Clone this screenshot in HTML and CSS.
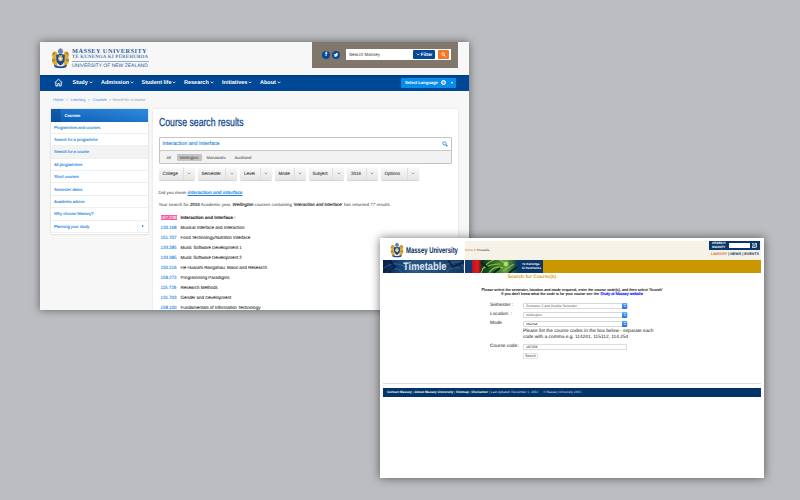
FILE: index.html
```
<!DOCTYPE html>
<html lang="en">
<head>
<meta charset="utf-8">
<title>Massey University course search</title>
<link rel="stylesheet" href="styles.css">
</head>
<body>
<svg class="defs" width="0" height="0" aria-hidden="true">
  <symbol id="crest" viewBox="0 0 20 21">
    <path d="M3 3C1 5 0 8 2 9C0 12 1 16 4 18L7 19L6 13L5 10L7 7L6 4ZM17 3C19 5 20 8 18 9C20 12 19 16 16 18L13 19L14 13L15 10L13 7L14 4Z" fill="#e3a92c"/>
    <path d="M2 6L4 5M1.500 13L4 12M18 6L16 5M18.500 13L16 12" stroke="#1c478c" stroke-width=".8"/>
    <path d="M8 1L10 0L12 1L13 4L11 6H9L7 4Z" fill="#6982a5"/>
    <path d="M5.500 7Q10 5 14.500 7V12Q14 16 10 18Q6 16 5.500 12Z" fill="#174b94"/>
    <circle cx="10" cy="11" r="2.600" fill="#e8bd55"/>
    <path d="M8 8h4M10 9.500v3M8.500 11h3" stroke="#fff" stroke-width=".7"/>
    <path d="M3 17Q10 21.500 17 17L16 20Q10 22 4 20Z" fill="#174b94"/>
  </symbol>
  <symbol id="chev" viewBox="0 0 6 4"><path d="M1 .8L3 2.800L5 .8" fill="none" stroke="currentColor" stroke-width="1.100"/></symbol>
  <symbol id="mag" viewBox="0 0 8 8"><circle cx="3.200" cy="3.200" r="2.200" fill="none" stroke="currentColor" stroke-width="1.100"/><path d="M5 5L7.300 7.300" stroke="currentColor" stroke-width="1.500"/></symbol>
</svg>

<main class="window search-window">
  <header class="top">
    <svg class="crest"><use href="#crest"/></svg>
    <div class="brand">
      <div class="b1">MASSEY UNIVERSITY</div>
      <div class="b2">TE KUNENGA KI PŪREHUROA</div>
      <div class="b3">UNIVERSITY OF NEW ZEALAND</div>
    </div>
    <div class="tools">
      <span class="social">f</span>
      <span class="social"><svg width="5" height="4" viewBox="0 0 10 8"><path d="M0 7Q3 8 5 6Q2 6 1 1Q3 3 5 3Q5 0 7 0L10 1Q9 8 3 8Z" fill="#fff"/></svg></span>
      <div class="site-search"><span class="ph">Search Massey</span><span class="filter"><svg class="chev"><use href="#chev"/></svg>Filter</span><span class="go"><svg><use href="#mag"/></svg></span></div>
    </div>
  </header>
  <nav class="nav">
    <svg class="house" viewBox="0 0 9 9"><path d="M.7 4.800L4.500 1.200L8.300 4.800M1.900 4.200V8H3.800V5.500H5.300V8H7.200V4.200" fill="none" stroke="#fff" stroke-width=".9"/></svg>
    <a class="n1">Study<svg class="chev"><use href="#chev"/></svg></a>
    <a class="n2">Admission<svg class="chev"><use href="#chev"/></svg></a>
    <a class="n3">Student life<svg class="chev"><use href="#chev"/></svg></a>
    <a class="n4">Research<svg class="chev"><use href="#chev"/></svg></a>
    <a class="n5">Initiatives<svg class="chev"><use href="#chev"/></svg></a>
    <a class="n6">About<svg class="chev"><use href="#chev"/></svg></a>
    <span class="lang">Select Language<i class="globe"></i><b class="tri"></b></span>
  </nav>
  <div class="crumbs"><a>Home</a><i>&gt;</i><a>Learning</a><i>&gt;</i><a>Courses</a><span>&gt; Search for a course</span></div>
  <div class="body">
    <aside class="side">
      <div class="side-head">Courses</div>
      <a>Programmes and courses</a>
      <a>Search for a programme</a>
      <a class="on">Search for a course</a>
      <a>All programmes</a>
      <a>Short courses</a>
      <a>Semester dates</a>
      <a>Academic advice</a>
      <a>Why choose Massey?</a>
      <a class="more">Planning your study<span></span></a>
    </aside>
    <section class="panel">
      <h1><span>Course search results</span></h1>
      <div class="finder">
        <div class="query">interaction and interface<svg><use href="#mag"/></svg></div>
        <div class="tabs"><span class="t1">All</span><span class="t2">Wellington</span><span class="t3">Manawatu</span><span class="t4">Auckland</span></div>
      </div>
      <div class="filters">
        <div class="f1"><span>College</span><i><svg class="chev"><use href="#chev"/></svg></i></div>
        <div class="f2"><span>Semester</span><i><svg class="chev"><use href="#chev"/></svg></i></div>
        <div class="f3"><span>Level</span><i><svg class="chev"><use href="#chev"/></svg></i></div>
        <div class="f4"><span>Mode</span><i><svg class="chev"><use href="#chev"/></svg></i></div>
        <div class="f5"><span>Subject</span><i><svg class="chev"><use href="#chev"/></svg></i></div>
        <div class="f6"><span>2016</span><i><svg class="chev"><use href="#chev"/></svg></i></div>
        <div class="f7"><span>Options</span><i><svg class="chev"><use href="#chev"/></svg></i></div>
      </div>
      <p class="mean">Did you mean <a>interaction and interface</a></p>
      <p class="summary">Your search for <em>2016</em> Academic year, <em>Wellington</em> courses containing '<em>interaction and interface</em>' has returned <i>77</i> results</p>
      <div class="results">
        <div class="first"><b><mark>197.238</mark></b><span>Interaction and Interface <i>I</i></span></div>
        <div><b>133.168</b><span>Musical Interface and Interaction</span></div>
        <div><b>151.707</b><span>Food Technology/Nutrition Interface</span></div>
        <div><b>133.285</b><span>Music Software Development 1</span></div>
        <div><b>133.385</b><span>Music Software Development 2</span></div>
        <div><b>150.216</b><span>He Huarahi Rangahau: Maori and Research</span></div>
        <div><b>159.272</b><span>Programming Paradigms</span></div>
        <div><b>115.729</b><span>Research Methods</span></div>
        <div><b>131.703</b><span>Gender and Development</span></div>
        <div><b>158.100</b><span>Fundamentals of Information Technology</span></div>
      </div>
    </section>
  </div>
</main>

<section class="window time-window">
  <header class="tt-top">
    <div class="tt-logo"><svg><use href="#crest"/></svg><span><b>Massey University</b></span></div>
    <div class="tt-bar">
      <div class="tt-crumbs"><a>Home</a> &gt; Timetable</div>
      <div class="tt-tools">
        <div class="tt-search"><span>SEARCH<br>MASSEY</span><i></i><svg><use href="#mag"/></svg></div>
        <div class="tt-links"><a>LIBRARY</a> | NEWS | EVENTS</div>
      </div>
    </div>
  </header>
  <div class="banner">
    <div class="photo">
      <svg viewBox="0 0 81 13" preserveAspectRatio="none">
        <defs>
          <linearGradient id="blue"><stop offset="0" stop-color="#071d3e"/><stop offset=".15" stop-color="#103b70"/><stop offset=".35" stop-color="#285482"/><stop offset=".65" stop-color="#244d7b"/><stop offset="1" stop-color="#123765"/></linearGradient>
        </defs>
        <rect width="81" height="13" fill="url(#blue)"/>
        <path d="M0 9Q8 1 18 5T35 12M3 13Q12 4 20 13M50 0Q56 8 68 3T81 10M63 13Q66 6 77 8" stroke="#54779c" fill="none" opacity=".6"/>
        <path d="M6 0L12 7L4 13M65 0L70 7L81 2" stroke="#041835" stroke-width="2" fill="none" opacity=".7"/>
      </svg>
      <span>Timetable</span>
    </div>
    <div class="navy"></div>
    <svg class="fern" viewBox="0 0 45 13" preserveAspectRatio="none">
      <defs><linearGradient id="fern"><stop offset="0" stop-color="#b31525"/><stop offset=".13" stop-color="#e91922"/><stop offset=".19" stop-color="#67201c"/><stop offset=".24" stop-color="#073d24"/><stop offset=".5" stop-color="#316d26"/><stop offset=".75" stop-color="#66a23c"/><stop offset="1" stop-color="#113e4a"/></linearGradient></defs>
      <rect width="45" height="13" fill="url(#fern)"/>
      <path d="M9 13Q13 3 22 0M10 9Q18 4 28 4M17 13Q22 5 31 8M28 0L36 5M31 11L42 4" stroke="#8dbf50" fill="none" stroke-width="1.100"/>
      <path d="M9 2L16 8M21 13L28 8M37 13L45 7" stroke="#05271e" stroke-width="2"/>
      <circle cx="34" cy="4" r="2.300" fill="#b9d66b"/>
    </svg>
    <div class="maori">Te Kunenga<br>ki Purehuroa</div>
  </div>
  <h2>Search for Course(s)</h2>
  <p class="intro">Please select the semester, location and mode required, enter the course code[s], and then select 'Search'<br><span>If you don't know what the code is for your course see the <a>Study at Massey website</a></span></p>
  <div class="form">
    <label>Semester :</label><div class="select">Semester 2 and Double Semester<i></i></div>
    <label>Location &nbsp;:</label><div class="select">Wellington<i></i></div>
    <label>Mode</label><div class="select dark">Internal<i></i></div>
    <p class="hint">Please list the course codes in the box below - separate each<br>code with a comma e.g. 114241, 115112, 114.254</p>
    <label class="cc">Course code:</label><div class="input">197238</div>
    <button>Search</button>
  </div>
  <hr>
  <footer><b>Contact Massey</b> | <b>About Massey University</b> | <b>Sitemap</b> | <b>Disclaimer</b> | <span>Last updated: December 1, 2002</span><span class="copy">© Massey University 2003</span></footer>
</section>
</body>
</html>
```
FILE: styles.css
```
* { box-sizing: border-box; }
body { margin: 0; width: 800px; height: 500px; position: relative; overflow: hidden; background: #bcbdc0; font-family: "Liberation Sans", Arial, sans-serif; text-rendering: geometricPrecision; color: #333; }
h1, h2, p { margin: 0; }
.defs { position: absolute; }
.window { position: absolute; overflow: hidden; white-space: nowrap; }
.search-window { left: 40px; top: 42px; width: 428.500px; height: 267.500px; background: #f7f7f8; box-shadow: 0 0 8px rgba(0,0,0,.5); }
.time-window { left: 380px; top: 238px; width: 384px; height: 240px; padding: 2.500px 3px 0; background: #fff; box-shadow: 0 0 9px rgba(0,0,0,.55); }
.chev { width: 4.200px; height: 3px; }

.top { height: 33px; display: flex; }
.crest { width: 19px; height: 20.500px; margin: 6px 0 0 11px; }
.brand { width: 77px; margin: 5.500px 0 0 2px; color: #285799; }
.b1 { font: bold 6.300px/7px "Liberation Serif", serif; letter-spacing: .47px; }
.b2 { font: bold 4.800px/6px "Liberation Serif", serif; letter-spacing: .24px; border-bottom: .8px solid #8fabd0; height: 7px; color: #557db1; }
.b3 { font-size: 5px; line-height: 8px; }
.tools { width: 146px; height: 26px; margin-left: 163px; background: #81766b; display: flex; align-items: center; padding-left: 10px; }
.social { width: 8px; height: 8px; margin-right: 1.500px; border-radius: 50%; background: #064a93; color: #fff; font: bold 6px/8px "Liberation Sans"; display: flex; align-items: center; justify-content: center; }
.site-search { margin: -1px 0 0 5px; width: 105px; height: 11px; background: #fff; display: flex; align-items: center; font-size: 4.500px; }
.ph { width: 67px; padding-left: 3px; }
.filter { width: 22px; height: 9px; background: #064896; border-radius: 1px; color: #fff; font-weight: bold; font-size: 4.700px; line-height: 9px; display: flex; align-items: center; justify-content: center; gap: 1px; }
.go { width: 11.500px; height: 9px; margin-left: 2.500px; border-radius: 1px; background: #f57626; color: #fff; display: flex; align-items: center; justify-content: center; }
.go svg { width: 5px; height: 5px; }
.nav { height: 15.500px; background: linear-gradient(#003f86, #004996 25%, #004795); color: #fff; display: flex; align-items: center; padding-left: 14px; font-weight: bold; font-size: 5.500px; }
.nav a { display: flex; align-items: center; gap: .8px; }
.house { width: 9px; height: 9px; margin-right: 9.500px; }
.n1 { width: 28.500px; } .n2 { width: 40.500px; } .n3 { width: 42.500px; } .n4 { width: 38px; } .n5 { width: 38px; } .n6 { width: 30px; }
.lang { margin-left: 111px; width: 55px; height: 10px; background: #078ce9; border-radius: 1px; display: flex; align-items: center; padding-left: 4px; font-size: 4.200px; letter-spacing: -.03px; }
.globe { width: 5px; height: 5px; border: .7px solid #fff; border-radius: 50%; margin-left: 3px; background: #69b8f3; }
.tri { margin-left: 5px; border: 1.500px solid transparent; border-top: 2.500px solid #fff; border-bottom: 0; }
.crumbs { height: 18.500px; padding: 0 0 0 13px; display: flex; align-items: center; font-size: 4px; color: #999; letter-spacing: -.1px; }
.crumbs a { color: #4b8be2; }
.crumbs i { font-style: normal; margin: 0 2.500px 0 2.500px; }
.crumbs span { margin-left: 2px; }
.body { display: flex; gap: 5px; padding-left: 11px; }
.side { width: 97px; height: 124.500px; background: #fff; box-shadow: 0 0 2px rgba(0,0,0,.2); }
.side-head { height: 12.500px; padding-left: 13.500px; background: linear-gradient(90deg, rgba(0,55,125,.35) 0 9px, transparent 10px), linear-gradient(10deg, #0c5cb2, #2e8be0); color: #fff; font-weight: bold; font-size: 4.300px; line-height: 13px; letter-spacing: -.2px; }
.side a { height: 12.400px; border-bottom: .6px solid #efefef; padding-left: 3px; display: flex; align-items: center; color: #1381e3; font-size: 4.200px; letter-spacing: -.08px; -webkit-text-stroke: .08px #1381e3; }
.side .on { background: #f3f3f3; }
.side .more { justify-content: space-between; }
.more span { width: 11px; height: 12px; display: flex; align-items: center; justify-content: center; border-left: 1px solid #f3f3f3; }
.more span::before { content: ""; border: 1.500px solid transparent; border-left: 2px solid #1381e3; border-right: 0; }
.panel { width: 304.500px; height: 202px; padding: 6px 5.500px; background: #fff; box-shadow: 0 0 2px rgba(0,0,0,.13); }
h1 { height: 22px; font: 11.600px/15px "Liberation Sans", sans-serif; color: #0b468d; }
h1 span { display: inline-block; transform: scaleX(.75); transform-origin: 0 0; -webkit-text-stroke: .25px #0b468d; }
.finder { width: 293.500px; height: 27px; border: 1px solid #c4c4c4; border-radius: 1px; background: #f2f2f2; }
.query { height: 13px; background: #fff; border-bottom: 1px solid #c8c8c8; padding: 0 3px; display: flex; align-items: center; justify-content: space-between; color: #1583dd; font-size: 5.350px; -webkit-text-stroke: .1px #1583dd; }
.query svg { width: 6px; height: 6px; color: #3a7fd2; }
.tabs { display: flex; align-items: center; height: 12px; padding-left: 7px; font-size: 4.200px; color: #444; letter-spacing: -.05px; }
.t1 { width: 10px; }
.t2 { width: 25px; height: 7px; line-height: 7px; background: #c5c5c5; border-radius: 1px; text-align: center; }
.t3 { width: 28px; margin-left: 5px; }
.filters { display: flex; gap: 3px; height: 11.500px; margin-top: 4px; font-size: 4.500px; font-weight: bold; color: #555; }
.filters div { display: flex; justify-content: space-between; line-height: 11px; padding-left: 4px; background: linear-gradient(#f8f8f8, #e5e5e5); border-radius: 1.500px; box-shadow: 0 .5px 1px rgba(0,0,0,.18); }
.filters span { font-weight: normal; -webkit-text-stroke: .12px #444; }
.filters i { width: 12px; border-left: .6px solid #dedede; display: flex; align-items: center; justify-content: center; color: #888; }
.filters .chev { width: 4px; height: 3px; }
.f1 { width: 36px; } .f2 { width: 39.500px; } .f3 { width: 31.500px; } .f4 { width: 31px; } .f5 { width: 35.500px; } .f6 { width: 30.500px; } .f7 { width: 38px; }
.mean { margin-top: 9.500px; height: 8px; line-height: 8px; font-size: 4.400px; letter-spacing: .05px; }
.mean a { color: #1482df; font: italic bold 4.900px "Liberation Sans"; text-decoration: underline; text-decoration-thickness: .4px; letter-spacing: -.07px; }
.summary { margin-top: 3.500px; height: 8px; line-height: 8px; font-size: 4.400px; letter-spacing: .035px; }
.summary em { -webkit-text-stroke: .15px #333; }
.results { margin-top: 3.500px; }
.results div { display: flex; height: 10px; align-items: center; padding-left: 2px; font-size: 4.500px; line-height: 5px; letter-spacing: -.035px; color: #222; -webkit-text-stroke: .06px #222; }
.results b { width: 20px; font-weight: normal; color: #1482df; font-size: 4.500px; -webkit-text-stroke: .08px #1482df; }
.results mark { display: inline-block; height: 5px; line-height: 5px; background: #ef5aa0; color: #fff; -webkit-text-stroke: 0; }
.results .first { font-weight: bold; font-size: 4.600px; }
.first i { color: #eb9a54; font-style: normal; font-weight: normal; }

.tt-top { height: 19px; display: flex; }
.tt-logo { width: 82px; height: 19px; padding-left: 7px; display: flex; align-items: center; color: #062a61; }
.tt-logo svg { width: 14px; height: 16px; margin-right: 2px; }
.tt-logo span { width: 54px; font-size: 8.500px; }
.tt-logo b { display: inline-block; transform: scaleX(.7); transform-origin: 0 50%; }
.tt-bar { flex: 1; display: flex; justify-content: space-between; background: #f6f2e7; }
.tt-crumbs { font-size: 3px; line-height: 19px; }
.tt-crumbs a { color: #d95b25; }
.tt-tools { width: 52px; padding-top: .5px; }
.tt-search { width: 50.500px; height: 9px; background: #0a3769; color: #fff; display: flex; align-items: center; padding-left: 3px; font: bold 3.200px/3.600px "Liberation Sans"; }
.tt-search span { width: 17px; }
.tt-search i { width: 21px; height: 5px; background: #fff; }
.tt-search svg { width: 5px; height: 5px; margin-left: 1.500px; background: #bac5cf; color: #123a69; }
.tt-links { font: bold 3.700px/8px "Liberation Sans"; color: #17365f; padding-left: 2px; letter-spacing: -.01px; }
.tt-links a { color: #e17033; }
.banner { height: 13px; display: flex; background: #ca9700; }
.photo { width: 82px; display: grid; background: #f6f2e7; }
.photo > * { grid-area: 1 / 1; }
.photo svg { width: 81px; height: 13px; }
.photo span { padding-left: 20px; font: bold 11px/14px "Liberation Sans"; color: #dce7f0; transform: scaleX(.85); transform-origin: 20px 0; height: 13px; }
.navy { width: 7px; background: #103b73; }
.fern { width: 45px; height: 13px; }
.maori { width: 26px; background: #0a3768; color: #fff; padding: 2.500px 0 0 5px; font: bold 3.100px/4.300px "Liberation Sans"; }
h2 { margin-left: -80px; text-align: center; height: 9px; font: bold 4.900px/9px "Liberation Sans"; color: #d4a019; letter-spacing: 0; }
.intro { margin-top: 6.500px; text-align: center; font-size: 3.850px; line-height: 4.300px; color: #111; -webkit-text-stroke: .12px #111; }
.intro a { color: #2525ff; -webkit-text-stroke: .2px #2525ff; }
.form { margin: 4.500px 0 0 107px; width: 170px; display: grid; grid-template-columns: 33px 105px; grid-template-rows: repeat(3, 9.100px) 14px 9px 9px; align-items: center; font-size: 4.800px; color: #111; }
.select { height: 6px; border: .6px solid #d8d8d8; border-radius: 1px; display: flex; align-items: center; justify-content: space-between; padding-left: 2px; font-size: 3.400px; color: #555; }
.select.dark { color: #111; }
.select i { width: 5px; height: 6px; background: linear-gradient(#64adff, #146df0); border-radius: 1px; display: flex; flex-direction: column; align-items: center; justify-content: center; gap: .7px; }
.select i::before, .select i::after { content: ""; border: 1.200px solid transparent; border-bottom: 1.300px solid #fff; border-top: 0; }
.select i::after { border: 1.200px solid transparent; border-top: 1.300px solid #fff; border-bottom: 0; }
.hint { grid-column: 2; line-height: 5.800px; font-size: 4.800px; align-self: start; padding-top: 1px; }
.input { height: 5.500px; border: .6px solid #ddd; padding-left: 2px; font-size: 3.400px; line-height: 4.500px; width: 104px; }
button { grid-column: 2; width: 15px; height: 6px; padding: 0; border: .6px solid #e2e2e2; background: #fff; border-radius: 1px; font: 3.300px/4px "Liberation Sans"; color: #333; }
hr { margin: 22.700px 0 4px; border: 0; height: 1px; background: #ddd; }
footer { height: 9px; background: #023467; color: #d5dfe8; font-size: 3.280px; line-height: 9px; padding-left: 4px; }
footer b { color: #fff; }
.copy { margin-left: 5px; }
```
